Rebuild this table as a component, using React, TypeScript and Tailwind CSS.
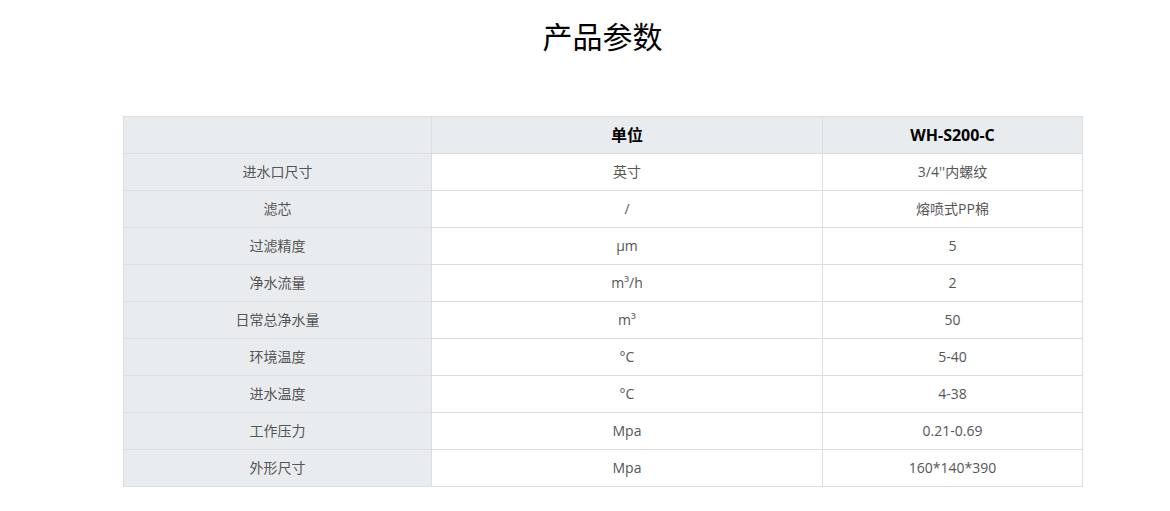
const ROWS: [string, string, string][] = [
  ['进水口尺寸', '英寸', '3/4\'\'内螺纹'],
  ['滤芯', '/', '熔喷式PP棉'],
  ['过滤精度', 'μm', '5'],
  ['净水流量', 'm³/h', '2'],
  ['日常总净水量', 'm³', '50'],
  ['环境温度', '°C', '5-40'],
  ['进水温度', '°C', '4-38'],
  ['工作压力', 'Mpa', '0.21-0.69'],
  ['外形尺寸', 'Mpa', '160*140*390'],
];

export default function App() {
  return (
    <div
      className="w-[1170px] h-[511px] bg-white overflow-hidden"
      style={{ fontFamily: '"Open Sans", "Noto Sans CJK SC", sans-serif' }}
    >
      <div className="ml-[123px] w-[959px]">
        <h1 className="pt-[17px] h-[116px] text-center text-[30px] leading-[40px] text-black font-normal">
          产品参数
        </h1>
        <table className="w-[959px] border-collapse table-fixed text-[14px]">
          <colgroup>
            <col className="w-[308px]" />
            <col className="w-[391px]" />
            <col className="w-[260px]" />
          </colgroup>
          <thead>
            <tr className="h-[37px] bg-[#e9ecef]">
              <th className="border border-[#dcdde1] pb-[1px]" />
              <th className="border border-[#dcdde1] pb-[1px] text-[16px] font-bold text-black">单位</th>
              <th className="border border-[#dcdde1] pb-[1px] text-[16px] font-bold text-black">WH-S200-C</th>
            </tr>
          </thead>
          <tbody>
            {ROWS.map(([a, b, c]) => (
              <tr key={a} className="h-[37px] text-[#555]">
                <td className="border border-[#dcdde1] pb-[2px] bg-[#e9ecef] text-center">{a}</td>
                <td className="border border-[#dcdde1] pb-[2px] text-center">{b}</td>
                <td className="border border-[#dcdde1] pb-[2px] text-center">{c}</td>
              </tr>
            ))}
          </tbody>
        </table>
      </div>
    </div>
  );
}
